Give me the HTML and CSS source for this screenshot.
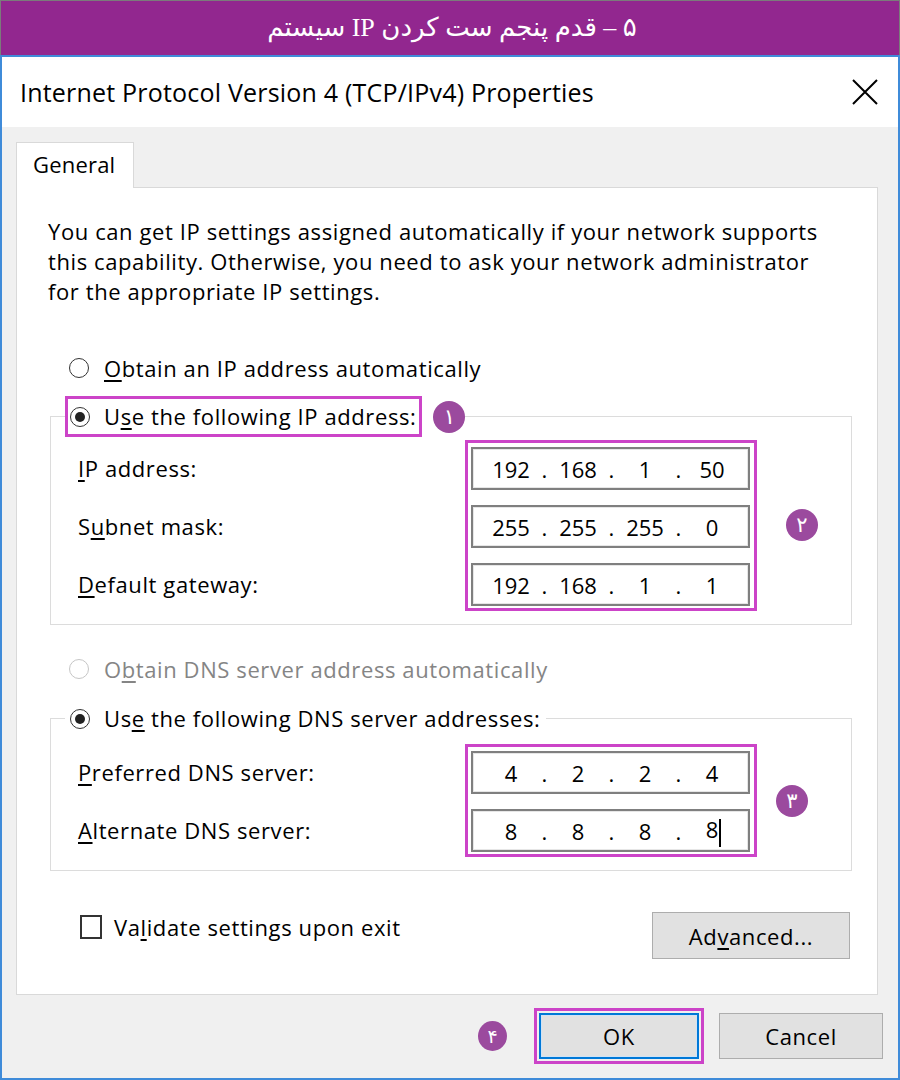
FILE: index.html
```html
<!DOCTYPE html>
<html>
<head>
<meta charset="utf-8">
<link rel="stylesheet" href="styles.css">
</head>
<body>
<div class="banner" dir="rtl">۵ – قدم پنجم ست کردن IP سیستم</div>
<div class="window">
  <div class="titlebar">
    <span class="title">Internet Protocol Version 4 (TCP/IPv4) Properties</span>
    <svg class="close" width="26" height="26" viewBox="0 0 26 26"><path d="M1 1 L25 25 M25 1 L1 25" stroke="#000" stroke-width="2" fill="none"/></svg>
  </div>
  <div class="body">
    <div class="tabs"><div class="tab">General</div></div>
    <div class="panel">
      <p class="desc">You can get IP settings assigned automatically if your network supports<br>this capability. Otherwise, you need to ask your network administrator<br>for the appropriate IP settings.</p>

      <div class="radio-row"><span class="radio"></span><span><u>O</u>btain an IP address automatically</span></div>

      <fieldset class="group group-ip">
        <legend class="legend">
          <span class="legend-box hl"><span class="radio checked"></span><span>U<u>s</u>e the following IP address:</span></span>
          <span class="badge">۱</span>
        </legend>
        <div class="group-body">
          <div class="labels">
            <div class="label"><u>I</u>P address:</div>
            <div class="label">S<u>u</u>bnet mask:</div>
            <div class="label"><u>D</u>efault gateway:</div>
          </div>
          <div class="fields hl">
            <div class="ip"><span class="oct">192</span><span class="dot">.</span><span class="oct">168</span><span class="dot">.</span><span class="oct">1</span><span class="dot">.</span><span class="oct">50</span></div>
            <div class="ip"><span class="oct">255</span><span class="dot">.</span><span class="oct">255</span><span class="dot">.</span><span class="oct">255</span><span class="dot">.</span><span class="oct">0</span></div>
            <div class="ip"><span class="oct">192</span><span class="dot">.</span><span class="oct">168</span><span class="dot">.</span><span class="oct">1</span><span class="dot">.</span><span class="oct">1</span></div>
          </div>
          <span class="badge badge-2">۲</span>
        </div>
      </fieldset>

      <div class="radio-row disabled dns-auto"><span class="radio"></span><span>O<u>b</u>tain DNS server address automatically</span></div>

      <fieldset class="group group-dns">
        <legend class="legend">
          <span class="legend-box"><span class="radio checked"></span><span>Us<u>e</u> the following DNS server addresses:</span></span>
        </legend>
        <div class="group-body dns-body">
          <div class="labels">
            <div class="label"><u>P</u>referred DNS server:</div>
            <div class="label"><u>A</u>lternate DNS server:</div>
          </div>
          <div class="fields hl">
            <div class="ip"><span class="oct">4</span><span class="dot">.</span><span class="oct">2</span><span class="dot">.</span><span class="oct">2</span><span class="dot">.</span><span class="oct">4</span></div>
            <div class="ip"><span class="oct">8</span><span class="dot">.</span><span class="oct">8</span><span class="dot">.</span><span class="oct">8</span><span class="dot">.</span><span class="oct">8<span class="caret"></span></span></div>
          </div>
          <span class="badge badge-3">۳</span>
        </div>
      </fieldset>

      <div class="bottom-row">
        <div class="check"><span class="box"></span><span>Va<u>l</u>idate settings upon exit</span></div>
        <div class="btn adv">Ad<u>v</u>anced...</div>
      </div>
    </div>
    <div class="footer">
      <span class="badge badge-4">۴</span>
      <span class="ok-wrap hl"><span class="btn ok">OK</span></span>
      <span class="btn cancel">Cancel</span>
    </div>
  </div>
</div>
</body>
</html>
```

FILE: styles.css
```css
html, body {
  margin: 0;
  padding: 0;
  background: #ffffff;
}
body {
  width: 900px;
  height: 1080px;
  overflow: hidden;
  font-family: "Open Sans", "Noto Sans", sans-serif;
  font-size: 22px;
  letter-spacing: 0.6px;
  color: #000;
}
u { text-decoration-thickness: 1.5px; text-underline-offset: 3px; }

.banner {
  box-sizing: border-box;
  height: 55px;
  background: #92278f;
  border: 1px solid #7b7b7b;
  border-bottom: none;
  color: #fff;
  font-family: "Liberation Serif", "DejaVu Sans", serif;
  font-size: 26px;
  letter-spacing: 0;
  display: flex;
  align-items: center;
  justify-content: center;
  padding-left: 4px;
  padding-bottom: 2px;
}

.window {
  box-sizing: border-box;
  height: 1025px;
  border: 2px solid #3f8bd9;
  display: flex;
  flex-direction: column;
}

.titlebar {
  height: 70px;
  flex: none;
  background: #fff;
  display: flex;
  align-items: center;
  justify-content: space-between;
  padding: 0 20px 0 18px;
}
.title {
  font-size: 25px;
  letter-spacing: 0.2px;
}
.close { display: block; }

.body {
  flex: 1;
  background: #f0f0f0;
  padding: 15px 0 0 14px;
  display: flex;
  flex-direction: column;
}

.tabs { display: flex; height: 45px; }
.tab {
  box-sizing: border-box;
  width: 118px;
  height: 46px;
  background: #fff;
  border: 1px solid #d9d9d9;
  border-bottom: none;
  padding-left: 16px;
  line-height: 42px;
  letter-spacing: 0.2px;
  position: relative;
  z-index: 1;
}

.panel {
  box-sizing: border-box;
  width: 862px;
  height: 808px;
  background: #fff;
  border: 1px solid #d9d9d9;
  padding: 28px 25px 0 31px;
}

.desc {
  margin: 0;
  line-height: 30px;
  white-space: nowrap;
}

.radio-row {
  display: flex;
  align-items: center;
  height: 30px;
  margin: 47px 0 0 21px;
  gap: 15px;
}
.radio {
  box-sizing: border-box;
  width: 20px;
  height: 20px;
  border: 1.5px solid #333;
  border-radius: 50%;
  display: inline-flex;
  align-items: center;
  justify-content: center;
  flex: none;
  background: #fff;
}
.radio.checked::after {
  content: "";
  width: 10px;
  height: 10px;
  border-radius: 50%;
  background: #222;
}
.disabled { color: #858585; }
.disabled .radio { border-color: #c6c6c6; }

.group {
  margin: 13px 0 0 2px;
  padding: 0 0 13px 27px;
  border: 1px solid #dcdcdc;
  min-width: 0;
}
.legend {
  margin-left: -13px;
  padding: 0;
  display: flex;
  align-items: center;
  gap: 11px;
  background: #fff;
}
.legend-box {
  display: flex;
  align-items: center;
  gap: 14px;
  border: 3px solid transparent;
  padding: 2px 3px 2px 2px;
  line-height: 31px;
  white-space: nowrap;
}
.hl { border: 3px solid #cc44c8 !important; }

.group-body {
  display: flex;
  align-items: center;
  margin-top: 3px;
}
.dns-body { margin-top: 5px; }

.labels {
  width: 387px;
  align-self: flex-start;
  padding-top: 7px;
  display: flex;
  flex-direction: column;
  gap: 15px;
}
.label { height: 43px; line-height: 43px; }

.fields {
  box-sizing: border-box;
  width: 292px;
  padding: 4px 4px 2px 3px;
  display: flex;
  flex-direction: column;
  gap: 15px;
}
.ip {
  box-sizing: border-box;
  height: 43px;
  border: 2px solid #7f7f7f;
  box-shadow: inset 0 0 0 1px #e6e6e6;
  background: #fff;
  display: flex;
  align-items: center;
  padding-left: 10px;
  letter-spacing: 0;
}
.oct { width: 56px; text-align: center; }
.dot { width: 11px; text-align: center; }
.caret {
  display: inline-block;
  width: 2px;
  height: 28px;
  background: #000;
  vertical-align: middle;
  margin-left: 1px;
  margin-right: -3px;
}

.badge {
  width: 32px;
  height: 32px;
  border-radius: 50%;
  background: #9b4a9e;
  color: #fff;
  font-family: "DejaVu Sans", sans-serif;
  font-size: 21px;
  letter-spacing: 0;
  display: inline-flex;
  align-items: center;
  justify-content: center;
  flex: none;
}
.badge-2 { margin-left: 29px; margin-top: -2px; }
.badge-3 { margin-left: 19px; }
.badge-4 { width: 29px; height: 30px; font-size: 19px; margin-right: 27px; }

.dns-auto { margin-top: 29px; }
.group-dns { margin-top: 14px; }

.bottom-row {
  display: flex;
  justify-content: space-between;
  align-items: flex-start;
  margin: 41px 2px 0 0;
}
.check {
  display: flex;
  align-items: center;
  gap: 12px;
  margin-left: 32px;
  height: 30px;
}
.check .box {
  box-sizing: border-box;
  width: 22px;
  height: 24px;
  border: 2px solid #333;
  background: #fff;
}

.btn {
  box-sizing: border-box;
  display: inline-flex;
  align-items: center;
  justify-content: center;
  background: #e1e1e1;
  border: 1px solid #adadad;
}
.adv { width: 198px; height: 47px; }

.footer {
  display: flex;
  justify-content: flex-end;
  align-items: center;
  padding: 13px 15px 0 0;
}
.ok-wrap { padding: 2px; display: inline-flex; }
.ok {
  width: 160px;
  height: 46px;
  border: 2px solid #0078d7;
  box-shadow: inset 0 0 0 1px #cfe3f6;
}
.cancel { width: 164px; height: 46px; margin-left: 15px; }
```
